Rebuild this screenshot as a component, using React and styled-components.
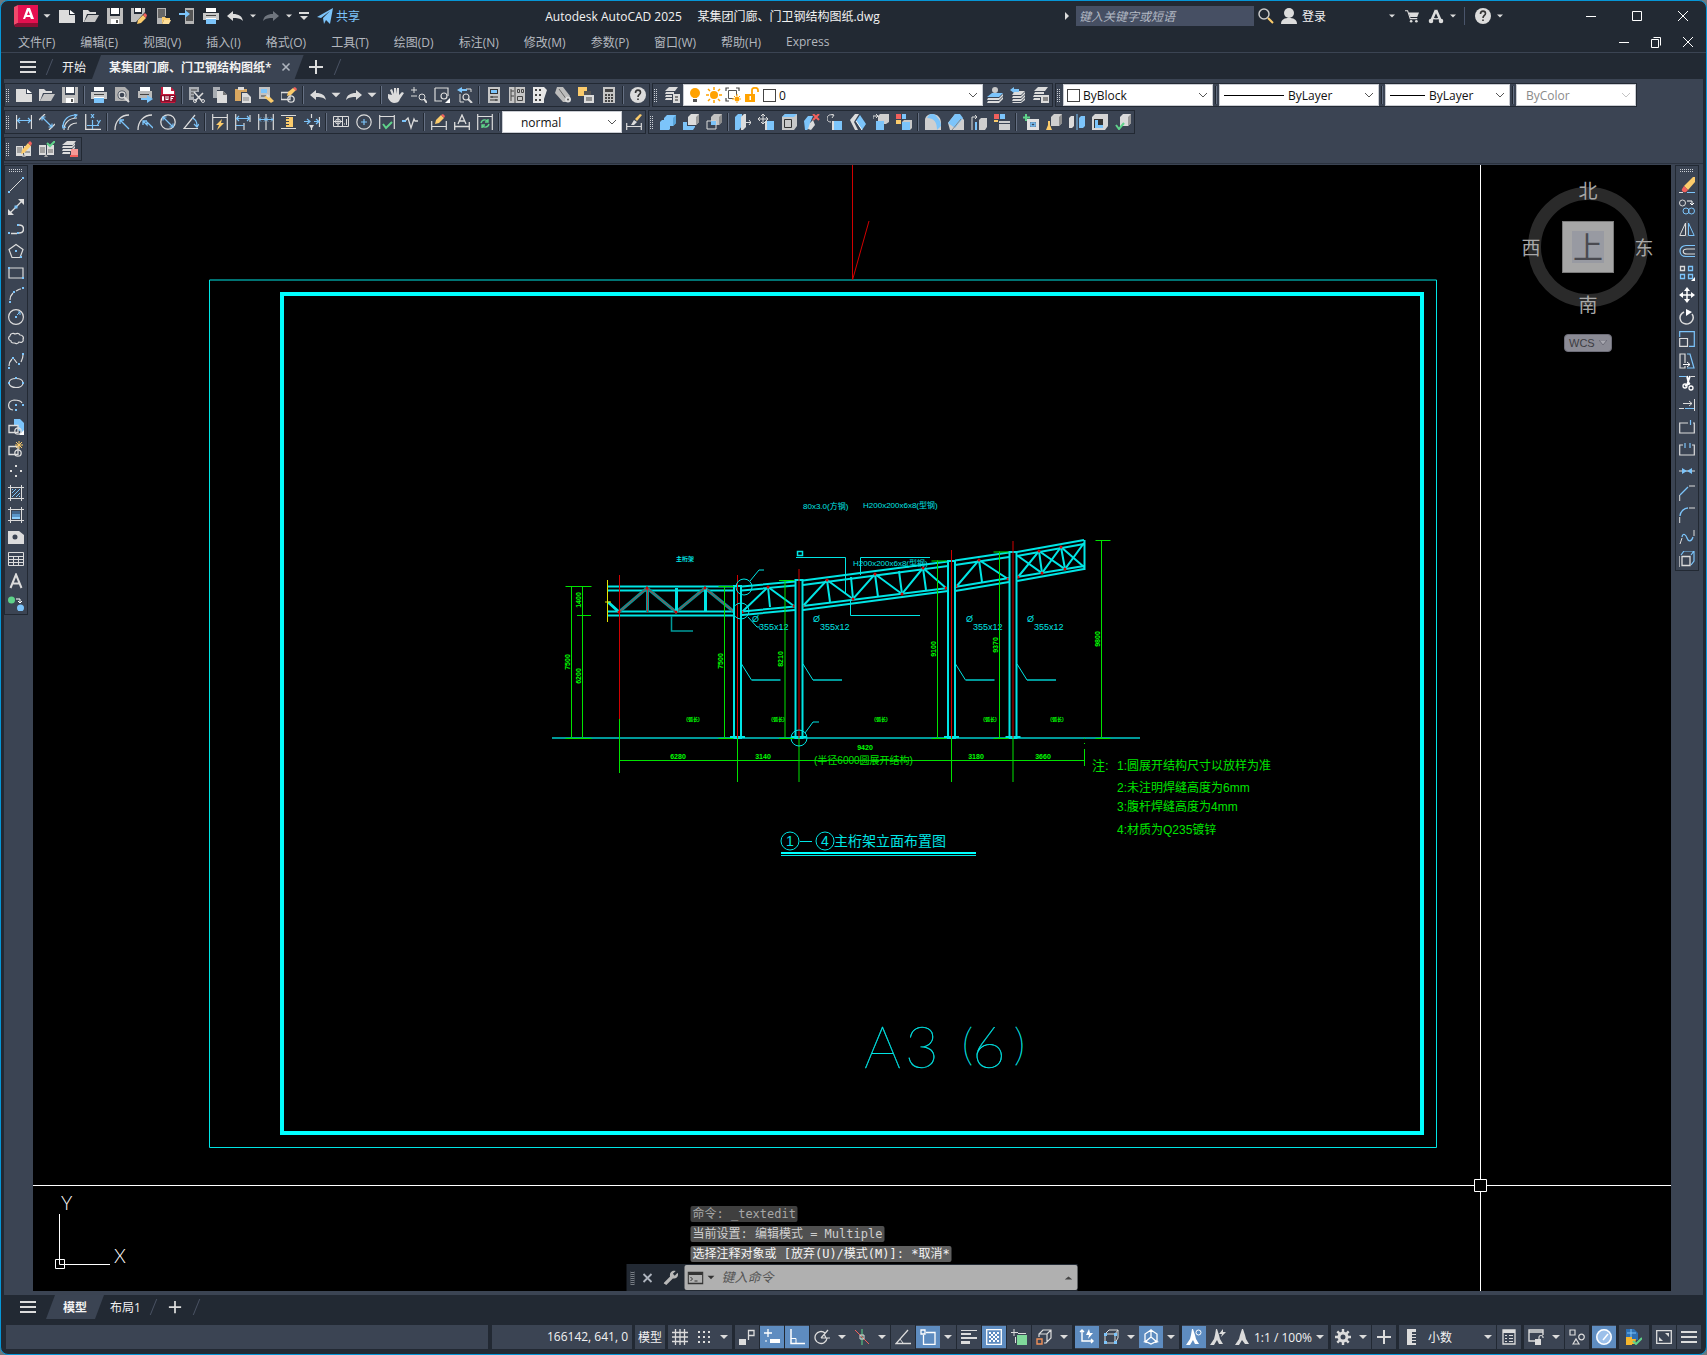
import React from 'react'
import styled, { createGlobalStyle, css } from 'styled-components'

const W = '#dcdcdc'
const B = '#7cc4fa'
const Y = '#fbcb6b'
const G = '#5fd38a'
const R = '#f2605c'
const CYAN = '#00e5e5'
const TEAL = '#009a9a'
const GREEN = '#00e400'
const RED = '#d00000'

const GlobalStyle = createGlobalStyle`
  * { box-sizing: border-box; }
  body {
    margin: 0;
    background: #6d7a80;
    font-family: "Open Sans", "Noto Sans CJK SC", sans-serif;
    font-size: 12px;
    color: #f2f2f2;
  }
  button, input, select { font: inherit; color: inherit; }
`

const Window = styled.div`
  min-height: 100vh;
  display: flex;
  flex-direction: column;
  background: #222933;
  border: 1px solid #0696d7;
  border-radius: 8px;
  padding-bottom: 5px;
  overflow: hidden;
`
const TitleBar = styled.header`
  display: flex;
  align-items: center;
  height: 30px;
  padding-left: 13px;
`
const Side = styled.div`
  display: flex;
  align-items: center;
  flex: none;
`
const Title = styled.h1`
  flex: 1;
  margin: 0;
  font-size: 12px;
  font-weight: 400;
  text-align: center;
  white-space: pre;
`
const IconButton = styled.button`
  display: inline-flex;
  align-items: center;
  justify-content: center;
  flex: none;
  width: ${({ $w }) => $w || 23}px;
  height: ${({ $h }) => $h || 22}px;
  padding: 0;
  border: 0;
  background: ${({ $on }) => ($on ? '#5e8cc0' : 'transparent')};
  &:hover { background: #5a6b80; }
`
const TextButton = styled.button`
  border: 0;
  padding: 0;
  background: none;
  white-space: nowrap;
  color: ${({ $c }) => $c || 'inherit'};
`
const AppButton = styled(TextButton)`
  display: flex;
`
const Share = styled(TextButton)`
  display: flex;
  align-items: center;
  gap: 3px;
  margin-left: 4px;
  color: ${B};
`
const SearchBox = styled.input`
  width: 178px;
  height: 20px;
  margin: 0 1px 0 6px;
  padding: 0 3px;
  border: 0;
  background: #464f63;
  &::placeholder { color: #b3b9c4; font-style: italic; opacity: 1; }
`
const Login = styled(TextButton)`
  display: flex;
  align-items: center;
  gap: 5px;
  margin: 0 58px 0 3px;
`
const VLine = styled.span`
  width: 1px;
  height: 18px;
  margin: 0 6px 0 5px;
  background: #4a556b;
`
const WinButtons = styled.div`
  display: flex;
  margin-left: 62px;
`
const MenuBar = styled.nav`
  display: flex;
  align-items: center;
  gap: 25px;
  height: 22px;
  padding: 0 2px 0 17px;
  border-bottom: 1px solid #3b4453;
`
const MenuEnd = styled.div`
  display: flex;
  margin-left: auto;
`
const TabBar = styled.div`
  display: flex;
  align-items: flex-end;
  height: ${({ $h }) => $h}px;
  padding-left: 15px;
`
const TabTool = styled.button`
  display: flex;
  align-items: center;
  justify-content: center;
  width: 24px;
  height: 24px;
  padding: 0;
  border: 0;
  background: none;
`
const Tab = styled.button`
  display: flex;
  align-items: center;
  gap: 7px;
  height: 24px;
  border: 0;
  padding: 0 ${({ $pad }) => $pad || 0}px;
  ${({ $active, $end }) => $active && css`
    margin-left: 6px;
    padding: 0 ${$end}px 0 17px;
    font-weight: 600;
    clip-path: polygon(9px 0, 100% 0, calc(100% - 9px) 100%, 0 100%);
  `}
  background: ${({ $active }) => ($active ? '#3b4453' : 'none')};
`
const Slash = styled.span`
  width: 1px;
  height: 16px;
  margin: 4px ${({ $r }) => $r || 9}px 4px ${({ $l }) => $l || 9}px;
  background: #4a5364;
  transform: skewX(-22deg);
`
const Work = styled.div`
  flex: 1;
  display: flex;
  flex-direction: column;
  margin: 0 3px;
  background: #3b4453;
`
const Bars = styled.div`
  display: flex;
  flex-direction: column;
  gap: 3px;
  padding: 4px 0 2px;
  border-bottom: 1px solid #2b323e;
`
const BarRow = styled.div`
  display: flex;
  gap: 2px;
`
const ToolBar = styled.div`
  display: flex;
  flex-direction: ${({ $col }) => ($col ? 'column' : 'row')};
  align-items: center;
  flex: none;
  ${({ $col }) => ($col ? 'width: 24px;' : 'height: 24px;')}
  border: 1px solid #222933;
`
const Grip = styled.span`
  flex: none;
  width: ${({ $col }) => ($col ? 14 : 4)}px;
  height: ${({ $col }) => ($col ? 4 : 14)}px;
  margin: ${({ $col }) => ($col ? '2px 0 2px' : '0 2px 0 1px')};
  background-image:
    linear-gradient(${({ $bg }) => $bg || '#3b4453'} 50%, transparent 50%),
    linear-gradient(90deg, #ccd0d6 50%, transparent 50%);
  background-size: 2px 2px;
`
const Sep = styled.span`
  flex: none;
  width: 2px;
  height: 18px;
  margin: 0 2px;
  background: linear-gradient(90deg, #222933 50%, #657083 50%);
`
const Combo = styled.label`
  display: flex;
  align-items: center;
  flex: none;
  gap: 3px;
  width: ${({ $w }) => $w}px;
  height: 22px;
  padding: 0 1px ${({ $pad }) => `0 ${$pad || 3}`}px;
  background: #fff;
  border: 1px solid #c9ccd2;
  color: ${({ $off }) => ($off ? '#8a8a8a' : '#111')};
`
const Select = styled.select`
  flex: 1;
  min-width: 0;
  padding: 0;
  border: 0;
  background: none;
  appearance: none;
  outline: none;
  opacity: 1;
`
const Swatch = styled.span`
  width: 13px;
  height: 13px;
  border: 1px solid #444;
  background: #fff;
`
const LineSample = styled.span`
  flex: none;
  width: ${({ $w }) => $w}px;
  height: 1px;
  margin: 0 1px;
  background: #000;
`
const Main = styled.main`
  flex: 1;
  display: flex;
  align-items: stretch;
  padding: 1px 0 4px;
`
const Rail = styled.aside`
  flex: none;
  width: ${({ $w }) => $w}px;
  padding-left: ${({ $pad }) => $pad}px;
`
const Canvas = styled.section`
  position: relative;
  flex: 1;
  min-width: 0;
  background: #000;
`
const Sheet = styled.svg`
  display: block;
  width: 100%;
  height: auto;
`
const Navigator = styled.div`
  position: absolute;
  top: 2px;
  right: 13px;
  width: 140px;
  display: flex;
  flex-direction: column;
  align-items: center;
  gap: 7px;
`
const Wcs = styled.button`
  display: flex;
  align-items: center;
  justify-content: space-between;
  width: 48px;
  height: 18px;
  padding: 0 4px;
  border: 1px solid #6d6d78;
  border-radius: 4px;
  background: #8b8b95;
  color: #3c3c42;
  font-family: "Liberation Sans", sans-serif;
  font-size: 11px;
`
const CommandPanel = styled.div`
  position: absolute;
  left: 50%;
  bottom: 0;
  width: 451px;
  transform: translateX(-50%);
`
const History = styled.div`
  display: flex;
  flex-direction: column;
  align-items: flex-start;
  gap: 4px;
  padding: 0 0 2px 64px;
  font-family: "DejaVu Sans Mono", "Noto Sans CJK SC", monospace;
`
const HistoryLine = styled.div`
  padding: 0 2px;
  height: 16px;
  line-height: 16px;
  border-radius: 2px;
  white-space: pre;
  background: ${({ $bg }) => $bg};
  color: ${({ $c }) => $c};
`
const CommandBar = styled.div`
  display: flex;
  align-items: center;
  height: 27px;
  padding-left: 3px;
  background: #222933;
`
const CommandField = styled.label`
  flex: 1;
  display: flex;
  align-items: center;
  gap: 3px;
  height: 25px;
  margin-left: 2px;
  padding: 0 3px;
  border-radius: 2px;
  background: #b0b0b0;
`
const CommandInput = styled.input`
  flex: 1;
  min-width: 0;
  padding: 0 0 0 3px;
  border: 0;
  outline: none;
  background: none;
  color: #222;
  &::placeholder { color: #555; font-style: italic; opacity: 1; font-size: 13px; }
`
const StatusBar = styled.footer`
  display: flex;
  gap: 3px;
  height: 24px;
  margin: 6px 5px 0;
`
const StatusFill = styled.div`
  flex: 1;
  margin-right: 1px;
  background: #3b4453;
`
const Coords = styled.div`
  width: 140px;
  padding-right: 4px;
  line-height: 24px;
  text-align: right;
  background: #3b4453;
`
const StatusGroup = styled.div`
  display: flex;
  gap: 1px;
`
const StatusCell = styled.div`
  display: flex;
  align-items: center;
  height: 24px;
  background: #3b4453;
`
const StatusText = styled(TextButton)`
  width: ${({ $w }) => $w}px;
  text-align: ${({ $align }) => $align || 'center'};
  padding-left: ${({ $pad }) => $pad || 0}px;
`

// every icon is a list of layers on a 16x16 grid
const s = (d, c = W, w = 1) => ({ d, fill: 'none', stroke: c, strokeWidth: w })
const f = (d, c = W) => ({ d, fill: c })
const ring = (x, y, r) => `M${x - r} ${y}a${r} ${r} 0 1 0 ${r * 2} 0a${r} ${r} 0 1 0 ${-r * 2} 0z`
const box = (x, y, w, h) => `M${x} ${y}h${w}v${h}h${-w}z`
const pencil = f('M5 13l1-4 6-7 3 3-7 7z', Y)
const pencilTip = f('M12 2l2-2 2 2-1 3z', R)

const icons = {
  newFile: [f('M0 2h10v5h6v8H0z'), f('M11 2l5 4h-5z', '#fff')],
  open: [f('M0 2h5l2 2h6v2H4l-3 8H0z'), f('M5 7h11l-4 7H1z', '#c4c4c4')],
  save: [f('M0 0h3v8h10V0h3v16H0z', '#bdbdbd'), f(box(4, 0, 8, 6), '#fff'), f(box(4, 11, 8, 5), '#fff'), f(box(9, 12, 2, 3), '#555')],
  saveAs: [f('M0 0h3v6h8V0h3v4L5 14H0z', '#bdbdbd'), f(box(4, 0, 6, 4), '#fff'), f('M6 16l1-4 5-5 3 3-5 5z', Y), f('M12 7l2-2 2 2-1 3z', R)],
  openMobile: [f('M2 0h9v8H7v8H2z', '#b5b5b5'), f(box(3, 1, 7, 9), '#666'), f('M7 9h3l1 1h4v2H9l-2 4z', Y), f('M9 12h7l-2 4H7z', '#ffe09a')],
  saveMobile: [f(box(6, 0, 9, 16), '#b5b5b5'), f(box(7, 2, 7, 11), '#555'), f('M0 5h6V2l5 4-5 4V7H0z', B)],
  print: [f(box(3, 0, 10, 4), '#fff'), f('M0 5h16v7H0z', '#c8c8c8'), f(box(3, 7, 10, 1), '#444'), f(box(3, 10, 10, 6), B), f(box(3, 10, 10, 1), '#fff')],
  undo: [f('M6 3v3c6 0 9 2 10 7-3-3-6-3-10-3v3L0 8z')],
  redo: [f('M10 3v3C4 6 1 8 0 13c3-3 6-3 10-3v3l6-5z')],
  redoOff: [f('M10 3v3C4 6 1 8 0 13c3-3 6-3 10-3v3l6-5z', '#6f757e')],
  drop: [f('M4 6h8l-4 4z')],
  dropBig: [f('M2 5h12l-6 6z')],
  customize: [f('M3 4h10v2H3z'), f('M4 8h8l-4 4z')],
  plane: [f('M0 9L16 0l-3 16-4-4-2 4-1-6 7-7-9 7z', B)],
  searchGlass: [s(ring(6, 6, 5), '#c8c8c8', 1.5), s('M10 10l5 5', Y, 2)],
  user: [f(ring(8, 5, 5)), f('M0 16c0-5 4-6 8-6s8 1 8 6z')],
  cart: [s('M0 2h3l3 9h8', W, 1.2), f('M4 4h12l-2 5H6z'), f(ring(7, 14, 1.5)), f(ring(13, 14, 1.5))],
  aMark: [s('M8 2L3 13.500M8 2l5 11.500', W, 2.6), s('M4 10c2 1 6 1 8 0', W, 1.6), f(ring(3, 13, 2.3)), f(ring(13, 13, 2.3))],
  help: [f(ring(8, 8, 8)), s('M5.500 6c0-4 5-3.500 5-.5 0 2-2.500 2-2.500 4.500', '#333', 1.6), f(box(7.2, 11.5, 1.6, 1.6), '#333')],
  minimize: [s('M3 8.500h10', '#fff')],
  maximize: [s('M3.500 3.500h9v9h-9z', '#fff')],
  restore: [s('M3.500 5.500h7v8h-7z', '#fff'), s('M5.500 3.500h7v8', '#fff')],
  close: [s('M3 3l10 10M13 3L3 13', '#fff')],
  closeSmall: [s('M4 4l8 8M12 4l-8 8', '#aeb4be', 1.8)],
  menu: [f('M0 2h16v2H0zM0 7h16v2H0zM0 12h16v2H0z')],
  plus: [f('M7 1h2v6h6v2H9v6H7V9H1V7h6z')],
  preview: [f('M1 0h10l4 4v10H1z', '#b0b0b0'), f(ring(8, 8, 4.5), '#3b4453'), s(ring(8, 8, 3), W, 1.3), s('M10 10l5 5', W, 2)],
  publish: [f(box(3, 0, 10, 4), '#fff'), f('M1 4h14v7H1z', '#bbb'), f(box(3, 7, 9, 1), '#444'), f('M4 11h6V8l6 4-6 4v-3H4z', B)],
  dwf: [f('M1 0h10l4 4v12H1z', '#c8193c'), f('M3 0h8v4h3v3H3z', '#fff'), f('M0 8h16v7H0z', '#8c0f2c'), s('M2.500 9.500v4H3.500v-4zM6 9v4l1-1 1 1V9M11 14V9.500h3M11 11.500h2', '#fff')],
  cut: [f('M0 0h10v5H5v8H0z', '#a9adb3'), s('M2 3h6M2 6h4M2 9h3', '#444'), s('M5 5l8 9M14 6l-8 8', W, 1.6), s(ring(6, 14, 1.5)), s(ring(14, 14, 1.5))],
  copy: [f('M1 0h7v3H5v8H1z', '#a9adb3'), f('M5 4h6l4 4v8H5z'), f('M11 4l4 4h-4z', '#777')],
  paste: [f('M0 2h12v3H6v9H0z', '#d9a760'), f(box(3, 0, 6, 3)), f('M7 6h5l4 4v6H7z'), s('M8 11h6M8 13h6', '#888')],
  match: [f('M1 0h11v12H1z', '#c2c2c2'), f(box(3, 2, 6, 4), B), s('M3 9h6', '#444'), f('M6 10l4-2 6 6-3 2z', Y), f('M9 7l3 2-1 2-3-2z')],
  blockEdit: [s('M0 5.500h9v7H0z', W, 1.3), s(ring(10, 12, 3.2), W, 1.3), f('M6 9l1-4 5-4 3 2-5 5z', Y), f('M12 1l2-1 2 2-1 2z', R)],
  hand: [f('M4 8L2 3l2-1 2 5V1h2v6l1-6h2l0 7 3-3 2 1-4 6c-1 3-3 4-6 4-4 0-5-4-8-8l2-1z')],
  zoomRt: [s('M0 3h6M3 0v6M0 9h6'), s(ring(11, 10, 3)), s('M13 12l3 4', W, 2)],
  zoomWin: [s('M1 1h13v8M1 1v13h7', W, 1.2), s(ring(10, 9, 3), W, 1.2), f('M16 11v5h-5z', '#fff')],
  zoomPrev: [s('M9 2h5v3M3 7v8h4', W), f('M0 3l5-3v2h5v2H5v2z', B), s(ring(9, 10, 3), W, 1.2), s('M11 12l4 4', W, 2)],
  properties: [f(box(2, 0, 12, 16), '#c6c6c6'), f(box(4, 2, 8, 5), '#333'), f(box(5, 3, 6, 3), B), s('M4 10h8M4 13h8M6 9v2M10 12v2', '#333')],
  designCenter: [f(box(0, 0, 16, 16), '#c6c6c6'), s('M2 2v12M2 4h3M2 9h3M6 0v16', '#444'), s('M8.500 2.500h2v3h-2zM12.500 2.500h2v3h-2zM8.500 9.500h5v4h-5z', '#444')],
  palettes: [f('M1 0h11l3 3-3 9v4H1z', '#e8e8e8'), f('M3 2h2v2H3zM7 2h2v2H7zM3 7h2v2H3zM7 7h2v2H7zM3 12h2v2H3zM7 12h2v2H7z', '#444')],
  sheets: [f('M2 0h6l7 9-3 6H8L0 6z', '#bcbcbc'), s('M4 2l8 11', '#666'), f(ring(13, 12.5, 3)), f(ring(13, 12.5, 1), '#555')],
  markup: [f(box(0, 0, 9, 9), Y), f('M6 4h7v4H6z', '#555'), f(box(6, 8, 10, 8)), s('M8 11h6M8 13h6', '#444')],
  calc: [f(box(2, 0, 12, 16), '#c6c6c6'), f(box(4, 2, 8, 3), '#444'), f('M4 7h2v2H4zM7 7h2v2H7zM10 7h2v2h-2zM4 10h2v2H4zM7 10h2v2H7zM10 10h2v2h-2zM4 13h2v2H4zM7 13h2v2H7zM10 13h2v2h-2z', '#444')],
  layerProps: [f('M5 0h9l-3 4H1z'), f('M2 5h8v2H1zM2 8h6v2H1zM2 11h6v2H1z'), f(box(9, 7, 7, 9)), s('M11 10h3M11 13h3', '#222')],
  layerCurrent: [f('M5 6h11l-4 4H0z', B), f('M1 11h11l4-4v2l-4 4H0zM1 14h11l4-4v2l-4 4H0z'), f(ring(8, 3, 3), '#c9c9c9')],
  layerPrev: [f('M5 4h10l-4 4H2z'), f('M3 9h8l4-4v2l-4 4H2zM3 12h8l4-4v2l-4 4H2zM3 15h8l4-4v2l-4 3H2z'), f('M0 3l4-3v2h5v3H4v1z', B)],
  layerStates: [f('M5 0h10l-3 4H1z'), f('M2 5h9v2H1zM1 8h7v2H0zM1 11h6v2H0z'), f(box(8, 8, 8, 8)), s('M10 11h5M10 13h5', '#333')],
  bulb: [f(ring(8, 6, 5), '#ffa200'), f('M5 8h6l-1 3H6z', '#ffa200'), f('M6 12h4v3H6z', '#555')],
  sun: [f(ring(8, 8, 4), '#ffa200'), s('M8 0v3M8 13v3M0 8h3M13 8h3M2 2l2 2M12 12l2 2M14 2l-2 2M2 14l2-2', '#ffa200', 1.5)],
  vpSun: [s('M1 4V1h3M11 1h3v3M1 11v3h3', '#444', 1.2), s('M3.500 3.500h8v5M3.500 3.500v8h5', '#555'), f(ring(12, 12, 2.5), '#ffa200'), s('M12 7v2M12 15v1M7 12h2M15 12h1M9 9l1 1M15 9l-1 1', '#ffa200')],
  unlock: [f(box(1, 7, 10, 8), '#ffa200'), s('M8 7V3c0-3 6-3 6 0v2', '#ffa200', 1.8), f(box(5.5, 9, 1.5, 4), '#fff')],
  chevron: [s('M4 6l4 4 4-4', '#555')],
  chevronOff: [s('M4 6l4 4 4-4', '#c4c4c4')],
  // dimension tools
  dimLinear: [s('M.5 1v14M15.500 1v14', W, 1.3), s('M1 6.500h14M4 4L1.500 6.500 4 9M12 4l2.500 2.500L12 9', B, 1.2)],
  dimAligned: [s('M0 6l6-6M10 16l6-6', W, 1.3), s('M3 3l10 10M3 6.500V3h3.500M13 9.500V13H9.500', B, 1.2)],
  dimArc: [s('M2 16C2 9 7 4 15 4M6 16c0-4 4-7 9-7', W, 1.2), s('M1 13C1 5 7 1 14 1M12 0l3 1-3 3M0 11l1 3 3-1', B, 1.2)],
  dimOrdinate: [s('M.7 0v15.300H16', W, 1.3), s('M7.500 6v9M2 11.500h12M6 0l3 4M9 0L6 4M12 6l2 3M15.500 6l-3 5', B, 1.2)],
  dimRadius: [s('M1 16C1 7 7 1 15 1', W, 1.3), s('M15 15L6 6M6 10V6h4', B, 1.3)],
  dimJog: [s('M1 16C1 7 7 1 15 1', W, 1.3), s('M6 7l4 4V8l6 6M6 11V7h4', B, 1.3)],
  dimDiameter: [s(ring(8, 8, 7.2), W, 1.3), s('M3 3l10 10M3 6.500V3h3.500M13 9.500V13H9.500', B, 1.2)],
  dimAngular: [s('M12 1L1 14.500h14', W, 1.2), s('M9 4c4 1 5 5 5 8M11 10l3 3 2-3', B, 1.2)],
  dimQuick: [s('M.7 0v16M15.300 0v16M1 3.500h14', W, 1.2), f('M10 5l-6 6h3l-2 5 7-7H9z', Y)],
  dimBaseline: [s('M.7 0v16M9 9v7M15 1v7', W, 1.2), s('M1 4.500h13M1 11.500h8M12 2l2.500 2.500L12 7M4 2L1.500 4.500 4 7', B, 1.2)],
  dimContinue: [s('M.7 0v16M8 0v16M15.300 0v16', W, 1.2), s('M1 5.500h14M3 3.500l-2 2 2 2M13 3.500l2 2-2 2M6 3.500l2 2-2 2M10 3.500l-2 2 2 2', B)],
  dimSpace: [s('M0 1.500h15M0 14.500h15', W, 1.2), f('M5 3h7v10H5v-2h3v-1H5V8h3V7H5V5h3V4H5z', Y)],
  dimBreak: [s('M7.500 0v4M7.500 12v4M15.500 3v10', W, 1.2), s('M0 7.500h5M10 7.500h5M12 5l3 2.500L12 10M3 5l3 2.500L3 10', B, 1.2), f('M5 11h5l-2.500 4z')],
  tolerance: [s('M.5 2.500h15v10H.5zM9.500 3v9'), s(ring(5, 7.5, 2.5)), s('M1 7.500h8M5 3v9M11.500 9.500v1M13.500 5v6')],
  centerMark: [s(ring(8, 8, 7.2), W, 1.2), s('M8 5v6M5 8h6', B, 1.2)],
  inspect: [s('M.7 1v14M15.300 1v14M1 2.500h14', W, 1.2), s('M4 10l3 4 6-6', G, 2)],
  jogLine: [s('M3 7l3-3 3 10 3-9 1 2h3', W, 1.3), s('M0 7h4', B, 2)],
  dimEdit: [s('M.7 7v9M15.300 7v9M1 12.500h14', W, 1.2), f('M4 10l1-4 5-5 3 3-5 5z', Y), f('M10 1l2-1 2 2-1 2z', R)],
  dimTextEdit: [s('M.7 8v8M15.300 8v8M1 12.500h14M4 10l4-9 4 9M5.500 7h5', W, 1.3)],
  dimUpdate: [s('M.7 0v16M15.300 0v16M1 2.500h14', W, 1.2), s('M4 9c1-4 6-4 7-1M12 10c-1 4-6 4-7 1M11 5v3H8M5 14v-3h3', G, 1.4)],
  dimStyle: [s('M.7 9v7M15.300 9v7M1 12.500h14', W, 1.2), f('M5 11l3-5 3 2-3 3z', W), f('M9 5l5-5 2 1-5 6z', Y)],
  // solids editing
  union: [f('M4 4l3-3h9v8l-3 3H10v3l-1 1H0V8l2-2h2z', B), f('M13 4l3-3v8l-3 3z', '#59a3d8')],
  subtract: [f('M5 3l3-3h8v8l-3 3H5z'), f('M0 8h4v4h8v1l-2 3H0z', B), f('M13 3l3-3v8l-3 3z', '#9b9b9b')],
  intersect: [f('M5 3l3-3h8v8l-3 3H5z', '#c2c2c2'), s('M1 7h9v8H1z', W), f(box(5, 7, 5, 4), B), f('M13 3l3-3v8l-3 3z', '#8d8d8d')],
  extrudeF: [f('M0 3l3-3h4v12l-3 4H0z', B), f('M6 3l3-3h2v13l-3 3H6z'), s('M11 8.500h5M14 6l2 2.500L14 11')],
  moveF: [s('M5 0v10M0 5h10M3 2l2-2 2 2M8 3l2 2-2 2M3 8l2 2 2-2M2 3L0 5l2 2'), f(box(8, 7, 8, 9), B), f(box(7, 7, 2, 9))],
  offsetF: [f('M1 3l3-3h12v12l-3 4H1z', '#c8c8c8'), f('M1 3l3-3h12l-3 3z', B), s('M3.500 5.500h7v8h-7z', '#333')],
  deleteF: [f('M0 7l4-5h5L6 9v4l-3 3H1z', B), f('M6 9l3-3 2 5-4 5-3-1z'), s('M9 0l6 6M15 0L9 6', R, 2)],
  rotateF: [s('M6 1C2 0 0 2 0 5c0 2 2 3 4 3M4 0l3 1-2 3'), f(box(7, 7, 8, 9), B), f('M5 7h2v9H5z')],
  taperF: [f('M0 6l5-6h4L4 8l4 8H5z'), f('M6 7l4-6 6 9-4 6z', B), s('M6 7l6 9', '#fff')],
  copyF: [f('M5 2l2-2h9v8l-3 2H5z', '#cfcfcf'), f(box(3, 7, 8, 9), B), s('M0 5V2h4M3 0l2 2-2 2')],
  colorF: [f(box(0, 0, 5, 5), R), f(box(6, 0, 4, 5), B), f(box(0, 6, 5, 4), Y), f('M6 8l2-2h8v8l-2 2H6z', '#c9c9c9'), f(box(6, 8, 8, 8), B)],
  filletE: [f('M0 6c0-4 4-6 7-6 6 0 9 4 9 9v7H0z', '#cfcfcf'), f('M4 1c3-2 6-1 8 2 3 3 4 6 4 9l-4 4C12 8 9 4 2 4z', B)],
  chamferE: [f('M0 9l7-9h4l5 6v10H2z', '#cfcfcf'), f('M0 9l7-9h5l3 4-8 10z', B), s('M4 16l9-11', '#888')],
  copyE: [s('M1 16V3h5M4 1l2 2-2 2', W), f('M4 8h2v8H4z', B), f('M8 6l2-2h6v9l-2 3H8z', '#cfcfcf')],
  colorE: [f(box(0, 0, 5, 5), R), f(box(6, 0, 5, 5), B), f('M5 7h11v2H5zM5 10h11v6H5z', '#cfcfcf'), f(box(0, 6, 4, 2), Y)],
  imprint: [s('M3 0v7M0 3.500h7', G, 2), f('M4 5h12v11H4z', '#e0e0e0'), f(box(7, 8, 6, 5), '#3b4453'), s('M8 9h4v3H8z', B, 1.5)],
  clean: [f('M5 3l3-3h8v9l-3 3H5z', '#cfcfcf'), f('M13 3l3-3v9l-3 3z', '#8d8d8d'), f('M2 7h2v4l2 5H0l2-5z', Y)],
  separate: [f('M0 4l2-2h3v10l-2 2H0z'), s('M8 0v16', B), f('M10 4l2-2h4v10l-2 2h-4z', B)],
  shell: [f('M0 3l3-3h13v12l-3 4H0z', '#d6d6d6'), f(box(2, 5, 9, 9), '#333'), f('M3 6h3v5h5v3H3z', B)],
  check: [f('M5 3l3-3h8v9l-3 3H5z', '#dadada'), f('M13 3l3-3v9l-3 3z', '#999'), s('M1 11l3 4 5-6', G, 2)],
  refEdit: [f('M0 5h7v10H0zM8 5h7v10H8z'), s('M1 7h5M1 9h5M1 11h5M9 11h5', '#666'), pencil, pencilTip, f('M6 16l2-3 2 3z', '#aaa')],
  refSave: [f('M0 4h7v10H0zM8 4h7v10H8z'), s('M1 7h5M1 9h5M1 11h5M9 9h5M9 11h5', '#666'), f('M5 16l2-3 2 3z', '#aaa'), s('M8 2l3 3 5-5', G, 2)],
  refClose: [f('M5 0h9l-3 4H0z'), f('M1 5h9l3-3v2l-3 3H0zM1 8h9l3-3v2l-3 3H0zM1 11h7v2H0z'), f('M9 8h7v7H9z', '#f79a97'), f('M8 14h8v2H8z', R)],
  // draw
  line: [s('M1 15L15 1'), f('M0 14h2v2H0zM14 0h2v2h-2z', B)],
  xline: [s('M2 14L14 2', W, 1.2), f('M0 16v-6l6 6zM16 0v6l-6-6z'), f(box(6.5, 6.5, 3, 3), B)],
  pline: [s('M3 12.500h6M11 4c6 0 6 8 0 8', W, 1.5), f('M0 11h2v2H0zM9 11h2v2H9zM9 3h2v2H9z', B)],
  polygon: [s('M8 1.500l7 5-3 8H4l-3-8z', W, 1.2), f('M7 7h2v2H7zM12 13h2v2h-2z', B)],
  rect: [s('M1 3h14v10H1z', W, 1.2), f('M0 2h2v2H0zM14 12h2v2h-2z', B)],
  arc: [s('M2 13c0-3 1-5 3-7M8 4c2-1 3-2 5-2', W, 1.2), f('M1 14h2v2H1zM5 4h2v2H5zM14 0h2v2h-2z', B)],
  circle: [s(ring(8, 8, 7.4), W, 1.2), f('M7 7h2v2H7z', B), s('M9 6l3-3M10 3h2v3', B)],
  cloud: [s('M3 10C0 9 0 6 2 5c0-3 4-3 5-2 2-1 4-1 5 1 3 0 4 3 3 4 1 3-2 4-4 3-1 2-4 2-4 1-2 0-4 0-4-2z', W, 1.2)],
  spline: [s('M1 13c0-3 1-5 3-7M6 6l3 4M13 9c1-2 2-4 2-7', W, 1.2), f('M0 14h2v2H0zM4 4h2v2H4zM10 10h2v2h-2zM14 0h2v2h-2z', B)],
  ellipse: [s('M1 8c0-6 14-6 14 0s-14 6-14 0z', W, 1.2), f('M0 7h2v2H0zM7 2h2v2H7zM14 7h2v2h-2z', B)],
  ellArc: [s('M5 13C-1 12-1 4 6 3c4 0 7 1 8 3', W, 1.2), f('M7 7h2v2H7zM14 7h2v2h-2zM7 12h2v2H7z', B)],
  insert: [f('M6 0h6l4 4v11l-6-4V6H6z', B), s('M1 6.500h9v7H1z', W, 1.3), s(ring(10, 12, 3.2), W, 1.3), f('M16 11v5h-5z', '#fff')],
  block: [s('M1 5.500h9v8H1z', W, 1.3), s(ring(10, 12, 3.2), W, 1.3), s('M11 0v8M7 4h8M8 1l6 6M14 1L8 7', Y)],
  point: [f('M7 2h2v2H7zM2 7h2v2H2zM12 7h2v2h-2zM7 12h2v2H7z')],
  hatch: [s('M0 2.500h16M0 13.500h16M2.500 0v16M13.500 0v16'), s('M4 8l4-4M4 12l8-8M8 12l4-4M4 5l1-1M11 12l1-1', B)],
  gradient: [s('M0 2.500h16M0 13.500h16M2.500 0v16M13.500 0v16'), f(box(4, 4, 8, 3), '#42668c'), f(box(4, 7, 8, 3), '#5a95c8'), f(box(4, 10, 8, 2), '#8bcdfc')],
  region: [f('M0 2h11l5 4v9H0z'), f(ring(7, 8, 2.5), '#3b4453')],
  table: [s('M.5 1.500h15v13H.5zM0 5.500h16M0 8.500h16M0 11.500h16M5.500 5v9M10.500 5v9')],
  mtext: [s('M2.500 15L8 1.500 13.500 15M4.500 10.500h7', W, 2)],
  addSel: [f(ring(3.5, 5, 3.5), G), f(ring(12.5, 13, 3.5), B), s('M8 4h4v4M10 6l2 2 2-2', '#fff')],
  // modify
  erase: [f('M5 9l9-9h2v5l-7 8z', Y), f('M5 9l4 4-2 2c-2 1-5-1-4-3z', R), s('M0 15.500h4'), s('M8 15.500h8', B)],
  copyObj: [s(ring(3.5, 4, 3)), s('M8 2h5v4M11 4l2 2 2-2', '#fff'), s(ring(7, 12, 3), B), s(ring(12.5, 12, 3), B)],
  mirror: [s('M6.500 2v12.500H.8z'), s('M9.500 2v12.500h5.700z', B), s('M8 0v16', '#888', 0.6)],
  offset: [s('M16 2.500H7c-8 0-8 11 0 11h9', B, 1.2), s('M16 6H8c-5 0-5 5 0 5h8', W, 1.2)],
  array: [s('M1.500 1.500h4v4h-4z', W, 1.3), s('M9.500 1.500h4v4h-4zM1.500 9.500h4v4h-4zM9.500 9.500h4v4h-4z', B, 1.3), f('M16 12v4h-4z', '#fff')],
  move: [s('M8 2v12M2 8h12', '#fff', 1.5), f('M8 0l3 4H5zM8 16l3-4H5zM0 8l4-3v6zM16 8l-4-3v6z', '#fff')],
  rotate: [s('M5 3C-1 6 0 14 7 15c6 0 9-6 6-10', W, 1.5), f('M7 0l6 3-6 4z', '#fff')],
  scale: [s('M.7 6V.7h14.600v14.600H10', B, 1.2), s('M.7 7.500h7.800v7.800H.7z', W, 1.2)],
  stretch: [s('M6 10V1H1v14h5v-2', W, 1.2), s('M8 1h3l4 14H8', B, 1.2), s('M4 11.500h7M8 9l3 2.500L8 14', '#fff')],
  trim: [s('M0 1.500h7', B), s('M12 1.500h4'), s('M8 1l2 9M11 1L8 10M11 8L6 11', '#fff', 1.8), s(ring(6, 11, 2), '#fff', 1.3), s(ring(12, 13, 2), '#fff', 1.3)],
  extend: [s('M15.500 2v12M0 11.500h5M4 6.500h9M10 4l3 2.500L10 9'), s('M6 11.500h9', B)],
  breakPt: [s('M9 4H.7v10h14.600V4H14', W, 1.2), s('M11.500 1v5', B, 1.2)],
  breakTwo: [s('M4 4H.7v10h14.600V4H13', W, 1.2), s('M6 2v5M11 2v5', B, 1.2)],
  join: [s('M0 8h16', W), f('M3 5l5 3-5 3zM13 5L8 8l5 3z', B)],
  chamfer: [s('M.7 16v-6M10 1h6'), s('M1 10l8-8', B, 1.3)],
  fillet: [s('M.7 16v-6M10 1h6'), s('M1 9c0-4 4-8 8-8', B, 1.3)],
  blend: [s('M1 15l2-6M15 1v6'), s('M3 8c1-5 4-2 5 1s4 5 6-1', B, 1.3)],
  explode: [s('M2 4l3-4h10v10l-3 4M12 4l3-4', B, 1.2), s('M0 5v11M3 5.500h8v9H3z', W, 1.3)],
  // command line and status bar
  wrench: [f('M0 14l7-7c-1-4 2-7 6-6l-3 3 2 2 3-3c2 4-2 7-5 6l-7 7z', '#b8b8b8')],
  prompt: [s('M.7 2.500h14.600v11H.7z', '#333', 1.3), s('M1 4h14', '#333', 2), s('M3 7l2 2-2 2M7 11h3', '#333')],
  upDark: [f('M3 10h10L8 6z', '#444')],
  downDark: [f('M2 5h12l-6 6z', '#333')],
  grid: [s('M3.500 0v16M8 0v16M12.500 0v16M0 3.500h16M0 8h16M0 12.500h16', W, 1.3)],
  dots: [f('M2 2h2v2H2zM7 2h2v2H7zM12 2h2v2h-2zM2 7h2v2H2zM7 7h2v2H7zM12 7h2v2h-2zM2 12h2v2H2zM7 12h2v2H7zM12 12h2v2h-2z')],
  infer: [f(box(0, 10, 7, 6)), s('M9.500 11V1.500H15v5H10', W, 1.3)],
  dynInput: [s('M4 0v8M0 4h8', '#fff', 1.3), f(box(6, 10, 10, 4), '#fff'), s('M2 11v2', '#fff')],
  ortho: [s('M2 0v14.500h14', '#fff', 1.5), s('M2 9.500h5v5', '#fff')],
  polar: [s('M11 4A6 6 0 1 0 13 9', W, 1.3), s('M7 9h9M7 9l7-8M10 5l2 4', W, 1.2)],
  iso: [s('M8 0v16', G), s('M1 1l14 14', R), s('M6 6h4v4H6z', '#ddd')],
  angle: [s('M13 1L1 14.500h15', W, 1.3), s('M5 10l3 4')],
  osnap: [s('M6 3.500h9v12H3.500V6', '#fff', 1.3), s('M1 1h4v4H1z', '#fff', 1.3)],
  weight: [f('M0 1h16v1H0zM0 4h10v2H0zM0 8h16v2H0zM0 12h9v3H0z')],
  transp: [s('M.7.7h14.600v14.600H.7z', '#fff', 1.3), f('M3 3h2v2H3zM7 3h2v2H7zM11 3h2v2h-2zM5 5h2v2H5zM9 5h2v2H9zM3 7h2v2H3zM7 7h2v2H7zM11 7h2v2h-2zM5 9h2v2H5zM9 9h2v2H9zM3 11h2v2H3zM7 11h2v2H7zM11 11h2v2h-2z', '#fff')],
  cycle: [s('M3 0v7M0 3.500h7', W), s('M7 4.500h8M4.500 8v6', W), f(box(6, 6, 10, 10), '#7fd89a')],
  osnap3d: [s('M3 8V5l4-4h8v8l-5 5H8M3 5h8l4-4M11 5v8', W, 1.2), s('M1 10h5v5H1z', '#f0905a', 1.4)],
  ducs: [s('M3 1v11h11M1 3l2-2 2 2M12 10l2 2-2 2', '#fff', 1.4), f('M10 0L7 6h3l-1 4 5-6h-3z', '#fff')],
  filter: [s('M2 5l4-4h9v8l-3 5M2 5h10v9H2zM12 5l3-4', W), f('M1 4h3v3H1zM11 4h3v3h-3zM1 12h3v3H1zM11 12h3v3h-3z', B)],
  gizmo: [s('M8 1v7l6 5M8 8l-6 5M8 1l6 4v7l-6 3-6-3V5z', '#fff', 1.3), f('M8 0l2 3H6zM0 13l4-2v3zM16 13l-4-2v3z', '#fff')],
  annoOn: [f('M6 0h1l2 6 1 4 3 5h-4l-2-4-3 5H0l4-6 1-4z', '#fff'), s(ring(12.5, 3.5, 2.5), '#fff')],
  annoAuto: [f('M6 0h1l2 6 1 4 3 5h-4l-2-4-3 5H0l4-6 1-4z'), f('M13 0l-4 5h3l-1 3 5-5h-3z')],
  annoScale: [f('M8 0h1l2 6 1 4 3 5h-4l-3-4-3 5H1l4-6 1-4z')],
  gear: [s(ring(8, 8, 4), W, 3), s('M8 0v3M8 13v3M0 8h3M13 8h3M2.300 2.300l2 2M11.700 11.700l2 2M13.700 2.300l-2 2M2.300 13.700l2-2', W, 2.4)],
  ruler: [f('M4 0h9v3H9v2h4v1H9v2h4v1H9v2h4v1H9v2h4v2H4z')],
  quickProps: [s('M2 1h12v14H2z', W, 1.3), f('M2 1h12v3H2z'), s('M4 6.500h2M4 9.500h2M4 12.500h2M8 6.500h4M8 9.500h4M8 12.500h4')],
  lockUi: [s('M7 12H1V1h14v5M1 3h14', W, 1.4), f(box(7, 10, 6, 6)), s('M11 10V8c0-2 4-2 4 0v1', W, 1.2)],
  isolate: [s('M1 1h5v5H1zM4 15l3-5 3 5z', W, 1.2), s(ring(12.5, 8, 2.8), W, 1.2)],
  perf: [f(ring(8, 8, 8), '#9cc0ea'), s(ring(8, 8, 7.2), '#fff', 1.5), s('M7 11l5-6', '#fff', 1.5)],
  trusted: [f('M0 0h8l4 4v7H0z', '#2d6fb3'), s('M1 4h9M5 0v8', B), f('M0 8h6v8H0z', '#f5b62e'), f('M6 10h4l-1 5H6z', '#f5b62e'), s('M7 12l3 3 6-6', G, 2)],
  fullScreen: [s('M.7 1.700h14.600v12.600H.7z', W, 1.3), f('M3 12V8l4 4zM13 4v4L9 4z')],
}

function Icon({ name, size = 16 }) {
  return (
    <svg width={size} height={size} viewBox="0 0 16 16" aria-hidden="true">
      {icons[name].map((layer, i) => <path key={i} {...layer} />)}
    </svg>
  )
}

function Tools({ list, w, h }) {
  return list.split(' ').map((name, i) => {
    if (name === '|') return <Sep key={i} />
    if (name === 'dropBig') return <IconButton key={i} $w={13} aria-label={name}><Icon name={name} size={12} /></IconButton>
    return <IconButton key={i} $w={w} $h={h} aria-label={name}><Icon name={name} /></IconButton>
  })
}

function ComboBox({ label, value, w, pad, off, before }) {
  return (
    <Combo $w={w} $pad={pad} $off={off}>
      {before}
      <Select aria-label={label} disabled={off} defaultValue={value}><option>{value}</option></Select>
      <Icon name={off ? 'chevronOff' : 'chevron'} />
    </Combo>
  )
}

const Logo = () => (
  <svg width="25" height="24" viewBox="0 0 25 24" aria-hidden="true">
    <path d="M0 3l4-2v18l-4 2z" fill="#f04a6b" />
    <path d="M4 1h20v18H4z" fill="#e51050" />
    <path d="M0 21l4-2h20v4H1z" fill="#8c0f33" />
    <path d="M9 15l4-11h3l4 11h-3l-1-2h-4l-1 2zM13 11h3l-1.500-4z" fill="#fff" />
  </svg>
)

const menus = ['文件(F)', '编辑(E)', '视图(V)', '插入(I)', '格式(O)', '工具(T)', '绘图(D)', '标注(N)', '修改(M)', '参数(P)', '窗口(W)', '帮助(H)', 'Express']

const drawTools = 'line xline pline polygon rect arc circle cloud spline ellipse ellArc insert block point hatch gradient region table mtext addSel'
const modifyTools = 'erase copyObj mirror offset array move rotate scale stretch trim extend breakPt breakTwo join chamfer fillet blend explode'

const Stroke = ({ d, c = CYAN, w = 1 }) => <path d={d} fill="none" stroke={c} strokeWidth={w} />

const columns = [
  { x: 737.5, top: 586, red: 575 },
  { x: 799, top: 580, red: 569 },
  { x: 951.5, top: 561, red: 550 },
  { x: 1013, top: 552, red: 541 },
]
const nodes = [
  [619, 612], [647, 588], [676, 612], [705, 588], [742, 612], [768, 587], [794, 606], [803, 606], [827, 580], [853, 599],
  [875, 574], [902, 594], [923, 568], [946, 588], [956, 586], [979, 560], [1008, 579], [1018, 577], [1039, 551], [1042, 573], [1061, 547], [1065, 569],
]
const heights = [
  { x: 571.5, y: 586, t: '7500', ty: 662 },
  { x: 582.5, y: 586, t: '6200', ty: 676 },
  { x: 724.5, y: 586, t: '7500', ty: 661 },
  { x: 785, y: 580, t: '8210', ty: 659 },
  { x: 937.5, y: 560.5, t: '9100', ty: 649 },
  { x: 999.5, y: 551.5, t: '9370', ty: 645 },
  { x: 1101.5, y: 540, t: '9800', ty: 639 },
]
const spans = [[678, 759, '6280'], [763, 759, '3140'], [865, 750, '9420'], [976, 759, '3180'], [1043, 759, '3660']]
const notes = [['1:圆展开结构尺寸以放样为准', 770], ['2:未注明焊缝高度为6mm', 792], ['3:腹杆焊缝高度为4mm', 811], ['4:材质为Q235镀锌', 834]]
const sheetMark = [['A', 864, 58, 1068], ['3', 905, 58, 1068], ['(', 962, 44, 1060], ['6', 972, 58, 1068], [')', 1014, 44, 1060]]

const SheetText = styled.text`
  font-family: "Liberation Sans", "Noto Sans CJK SC", sans-serif;
  font-size: ${({ $s }) => $s || 9}px;
  font-weight: ${({ $wt }) => $wt || 400};
  fill: ${({ $c }) => $c || CYAN};
  text-anchor: ${({ $mid }) => ($mid ? 'middle' : 'start')};
`
const ThinText = styled(SheetText)`
  font-family: "Lato", "Inter", sans-serif;
`
const OutlineText = styled(ThinText)`
  stroke: ${CYAN};
  stroke-width: 0.4px;
`

function Drawing() {
  return (
    <Sheet viewBox="33 165 1638 1126">
      <Stroke d="M209.500 280h1227v867.500h-1227z" />
      <Stroke d="M282 294h1140v839H282z" c="#00ffff" w={4} />
      <Stroke d="M852.500 165v115L869 221" c={RED} />

      {/* ground and left truss */}
      <Stroke d="M552 738h588" c={TEAL} w={2} />
      <Stroke d="M608 586.500h126M608 590.500h126M608 611.500h126M608 615.500h126" w={2} />
      <Stroke d="M619 612l28-24 29 24 29-24 28 23M647.500 588v24" c={TEAL} w={3} />
      <Stroke d="M619 612l28-24 29 24 29-24 28 23M647.500 588v24" c="#b83a3a" />
      <Stroke d="M608 602l11 10M676.500 588v24M705.500 588v24" w={3} />
      <Stroke d="M607.500 580v42M605 602h6" c="#e5e500" />

      {/* sloping truss */}
      <Stroke d="M742 586.500l53-5M742 590.500l53-5M803 580.500l145-19M803 585l145-19M955 560.500l54-8M955 565l54-8M1017 552l67-12M1017 556l67-12" w={2} />
      <Stroke d="M742 611.500l53-5M742 615l53-5M803 606l145-18M803 610l145-19M955 587l54-9M955 591l54-9M1017 577l67-11M1017 581l67-12" w={2} />
      <Stroke d="M742 612l26-25 26 19M803 606l24-26 26 19 22-25 27 20 21-26 23 20M956 587l23-27 29 19" w={2} />
      <Stroke d="M768 587l2 20M827 580l3 22M851 577l2 22M875 574l3 23M899 571l3 23M923 568l3 22M979 560l3 22M1039 551l3 22M1061 547l4 22" w={2} />
      <Stroke d="M1018 577l21-26 26 18 19-26M1018 556l24 17 19-26 23 20M1084.500 540v30" w={2} />
      {nodes.map(([x, y]) => <circle key={`${x}-${y}`} cx={x} cy={y} r="1.5" fill={RED} />)}

      {columns.map(({ x, top, red }) => (
        <g key={x}>
          <rect x={x - 3.5} y={top} width="7" height={738 - top} fill="#000" stroke={CYAN} strokeWidth="2" />
          <Stroke d={`M${x - 7.5} 737h15`} w={2} />
          <Stroke d={`M${x} ${red}V738`} c={RED} />
          <Stroke d={`M${x} 738v44`} c={GREEN} />
          <Stroke d={`M${x + 4} 664l10 16`} />
          <Stroke d={`M${x + 14} 680h29`} c={TEAL} w={2} />
        </g>
      ))}
      <Stroke d="M619.500 575v144" c={RED} />
      <Stroke d="M619.500 719v54" c={GREEN} />
      <Stroke d="M1084.500 738v1M1084.500 743v1M1084.500 749v17" c={GREEN} />

      {/* leaders and callouts */}
      <circle cx="744" cy="587" r="8" fill="none" stroke={CYAN} />
      <circle cx="741" cy="611" r="8" fill="none" stroke={CYAN} />
      <circle cx="799" cy="738" r="8" fill="none" stroke={CYAN} />
      <Stroke d="M750 581l9-11h5M748 617l9 10h3M805 733l8-11h6" />
      <Stroke d="M797.500 551.500h5v4h-5z" w={1.5} />
      <Stroke d="M796 557.500h49.500V594M860.500 575v-17.500H930M850.500 600v15.500H920" />
      <Stroke d="M671.500 616v15H693" c={TEAL} w={1.5} />
      <SheetText x="803" y="509" $s={8}>80x3.0(方钢)</SheetText>
      <SheetText x="863" y="508" $s={8}>H200x200x6x8(型钢)</SheetText>
      <SheetText x="853" y="566" $s={8}>H200x200x6x8(型钢)</SheetText>
      <SheetText x="676" y="561" $s={6} $wt={700}>主桁架</SheetText>
      {[759, 820, 973, 1034].map((x) => (
        <g key={x}>
          <SheetText x={x - 7} y="622">Ø</SheetText>
          <SheetText x={x} y="630">355x12</SheetText>
        </g>
      ))}

      {/* dimensions */}
      {heights.map(({ x, y, t, ty }) => (
        <g key={x}>
          <Stroke d={`M${x} ${y}V738M${x - 6} ${y + 0.5}h15M${x - 6} 738.500h15`} c={GREEN} />
          <SheetText $mid $s={7} $wt={700} $c="#00ff00" transform={`translate(${x - 2} ${ty}) rotate(-90)`}>{t}</SheetText>
        </g>
      ))}
      <Stroke d="M577 615.500h14" c={GREEN} />
      <SheetText $mid $s={7} $wt={700} $c="#00ff00" transform="translate(581 600) rotate(-90)">1400</SheetText>
      <Stroke d="M619 760.500h466" c={GREEN} />
      {spans.map(([x, y, t]) => <SheetText key={x} x={x} y={y} $mid $s={7} $wt={700} $c="#00ff00">{t}</SheetText>)}
      {[693, 778, 881, 990, 1057].map((x) => <SheetText key={x} x={x} y="721" $mid $s={5} $wt={700} $c="#00ff00">(弧长)</SheetText>)}
      <SheetText x="814" y="764" $s={10} $c={GREEN}>(半径6000圆展开结构)</SheetText>

      <SheetText x="1092" y="770" $s={13} $c={GREEN}>注:</SheetText>
      {notes.map(([t, y]) => <SheetText key={y} x="1117" y={y} $s={12} $c={GREEN}>{t}</SheetText>)}

      {/* sheet title */}
      <circle cx="790" cy="841" r="9" fill="none" stroke={CYAN} />
      <circle cx="825" cy="841" r="9" fill="none" stroke={CYAN} />
      <SheetText x="790" y="846" $mid $s={14}>1</SheetText>
      <SheetText x="825" y="846" $mid $s={14}>4</SheetText>
      <Stroke d="M800 841.500h12" />
      <SheetText x="834" y="846" $s={14}>主桁架立面布置图</SheetText>
      <Stroke d="M781 853h195" c="#00ffff" w={2} />
      <Stroke d="M781 855.500h195" />
      {sheetMark.map(([t, x, size, y]) => <OutlineText key={t} x={x} y={y} $s={size} $wt={100}>{t}</OutlineText>)}

      {/* crosshair and axes */}
      <Stroke d="M1480.500 165v1014M1480.500 1192v99M33 1185.500h1441M1487 1185.500h184M1474.500 1179.500h12v12h-12z" c="#fff" />
      <Stroke d="M59.500 1214v50.500H110M55.500 1259.500h9v9h-9z" c="#fff" />
      <ThinText x="61" y="1210" $s={19} $wt={300} $c="#fff">Y</ThinText>
      <ThinText x="114" y="1263" $s={19} $wt={300} $c="#fff">X</ThinText>
    </Sheet>
  )
}

const CubeText = styled.text`
  font-family: "Noto Sans CJK SC", sans-serif;
  font-size: ${({ $s }) => $s || 19}px;
  fill: ${({ $c }) => $c || '#a8a8a8'};
  text-anchor: middle;
`

function Compass() {
  return (
    <Navigator>
      <svg width="140" height="160" viewBox="0 -12 140 160">
        <circle cx="70" cy="68" r="53.500" fill="none" stroke="#2a2a2a" strokeWidth="13" />
        <rect x="44.500" y="42.500" width="51" height="51" fill="#a6a6a6" stroke="#7a7a7a" />
        <rect x="54" y="52" width="32" height="32" fill="#989aa2" />
        <CubeText x="70" y="79" $s={30} $c="#4a4a50">上</CubeText>
        <CubeText x="70" y="19">北</CubeText>
        <CubeText x="70" y="133">南</CubeText>
        <CubeText x="13" y="76">西</CubeText>
        <CubeText x="126" y="76">东</CubeText>
      </svg>
      <Wcs>WCS<svg width="8" height="6" viewBox="0 0 8 6"><path d="M0 0h8L4 5z" fill="#a8a8b0" stroke="#6d6d78" /></svg></Wcs>
    </Navigator>
  )
}

// "*" in front marks a mode that is switched on, "v" is a drop arrow
const statusGroups = [
  ['grid dots v'],
  ['infer', '*dynInput', '*ortho', 'polar v iso v', 'angle', '*osnap v', 'weight', '*transp', 'cycle', 'osnap3d v'],
  ['*ducs filter v *gizmo v'],
  ['*annoOn annoAuto annoScale 1:1/100% v'],
  ['gear v', 'plus'],
  ['ruler 小数 v', 'quickProps'],
  ['lockUi v', 'isolate'],
  ['*perf'],
  ['trusted'],
  ['fullScreen', 'menu'],
]

function StatusItem({ item }) {
  if (item === 'v') return <IconButton $w={16} aria-label="options"><Icon name="drop" /></IconButton>
  if (item === '1:1/100%') return <StatusText $w={58}>1:1 / 100%</StatusText>
  if (item === '小数') return <StatusText $w={57} $align="left" $pad={5}>小数</StatusText>
  const name = item.replace('*', '')
  return <IconButton $w={name === 'trusted' ? 30 : 24} $on={item[0] === '*'} aria-label={name}><Icon name={name} /></IconButton>
}

function App() {
  return (
    <>
      <GlobalStyle />
      <Window>
        <TitleBar>
          <Side>
            <AppButton aria-label="app menu"><Logo /></AppButton>
            <IconButton $w={16} aria-label="drop"><Icon name="drop" size={14} /></IconButton>
            <Tools list="newFile open save saveAs openMobile saveMobile print undo" w={24} />
            <IconButton $w={12} aria-label="drop"><Icon name="drop" size={12} /></IconButton>
            <IconButton $w={24} aria-label="redo"><Icon name="redoOff" /></IconButton>
            <IconButton $w={12} aria-label="drop"><Icon name="drop" size={12} /></IconButton>
            <IconButton $w={18} aria-label="customize"><Icon name="customize" /></IconButton>
            <Share><Icon name="plane" />共享</Share>
          </Side>
          <Title>{'Autodesk AutoCAD 2025     某集团门廊、门卫钢结构图纸.dwg'}</Title>
          <Side>
            <svg width="5" height="8" viewBox="0 0 5 8"><path d="M0 0l4 4-4 4z" fill={W} /></svg>
            <SearchBox aria-label="search" placeholder="键入关键字或短语" />
            <IconButton aria-label="search"><Icon name="searchGlass" /></IconButton>
            <Login><Icon name="user" />登录</Login>
            <IconButton $w={16} aria-label="drop"><Icon name="drop" size={12} /></IconButton>
            <IconButton $w={24} aria-label="cart"><Icon name="cart" size={14} /></IconButton>
            <IconButton aria-label="apps"><Icon name="aMark" /></IconButton>
            <IconButton $w={12} aria-label="drop"><Icon name="drop" size={12} /></IconButton>
            <VLine />
            <IconButton aria-label="help"><Icon name="help" /></IconButton>
            <IconButton $w={12} aria-label="drop"><Icon name="drop" size={12} /></IconButton>
            <WinButtons><Tools list="minimize maximize close" w={46} /></WinButtons>
          </Side>
        </TitleBar>

        <MenuBar>
          {menus.map((m) => <TextButton key={m} $c="#b4b8bf">{m}</TextButton>)}
          <MenuEnd><Tools list="minimize restore close" w={32} h={20} /></MenuEnd>
        </MenuBar>

        <TabBar $h={26}>
          <TabTool aria-label="menu"><Icon name="menu" /></TabTool>
          <Slash $l={9} $r={12} />
          <Tab>开始</Tab>
          <Tab $active $end={11}>某集团门廊、门卫钢结构图纸*<Icon name="closeSmall" size={14} /></Tab>
          <TabTool aria-label="new tab"><Icon name="plus" /></TabTool>
          <Slash />
        </TabBar>

        <Work>
          <Bars>
            <BarRow>
              <ToolBar>
                <Grip />
                <Tools list="newFile open save | print preview publish dwf | cut copy paste match blockEdit | undo dropBig redo dropBig | hand zoomRt zoomWin zoomPrev | properties designCenter palettes sheets markup calc | help" />
              </ToolBar>
              <ToolBar>
                <Grip />
                <Tools list="layerProps" />
                <ComboBox label="layer" value="0" w={300} before={<><Icon name="bulb" /><Icon name="sun" /><Icon name="vpSun" /><Icon name="unlock" /><Swatch /></>} />
                <Tools list="layerCurrent layerPrev layerStates" />
              </ToolBar>
              <ToolBar>
                <Grip />
                <ComboBox label="color" value="ByBlock" w={150} before={<Swatch />} />
                <Sep />
                <ComboBox label="linetype" value="ByLayer" w={160} before={<LineSample $w={60} />} />
                <Sep />
                <ComboBox label="lineweight" value="ByLayer" w={125} before={<LineSample $w={35} />} />
                <Sep />
                <ComboBox label="plot style" value="ByColor" w={120} pad={9} off />
              </ToolBar>
            </BarRow>
            <BarRow>
              <ToolBar>
                <Grip />
                <Tools list="dimLinear dimAligned dimArc dimOrdinate | dimRadius dimJog dimDiameter dimAngular | dimQuick dimBaseline dimContinue dimSpace dimBreak | tolerance centerMark inspect jogLine | dimEdit dimTextEdit dimUpdate |" />
                <ComboBox label="dimension style" value="normal" w={120} pad={18} />
                <Tools list="dimStyle" />
              </ToolBar>
              <ToolBar>
                <Grip />
                <Tools list="union subtract intersect | extrudeF moveF offsetF deleteF rotateF taperF copyF colorF | filletE chamferE copyE colorE | imprint clean separate shell check" />
              </ToolBar>
            </BarRow>
            <BarRow>
              <ToolBar>
                <Grip />
                <Tools list="refEdit refSave refClose" />
              </ToolBar>
            </BarRow>
          </Bars>

          <Main>
            <Rail $w={29} $pad={0}>
              <ToolBar $col><Grip $col /><Tools list={drawTools} w={22} /></ToolBar>
            </Rail>
            <Canvas>
              <Drawing />
              <Compass />
              <CommandPanel>
                <History>
                  <HistoryLine $bg="#3f3f3f" $c="#a8a8a8">命令: _textedit</HistoryLine>
                  <HistoryLine $bg="#505050" $c="#cfcfcf">当前设置: 编辑模式 = Multiple</HistoryLine>
                  <HistoryLine $bg="#606060" $c="#f4f4f4">选择注释对象或 [放弃(U)/模式(M)]: *取消*</HistoryLine>
                </History>
                <CommandBar>
                  <Grip $bg="#222933" />
                  <IconButton $w={22} aria-label="close"><Icon name="closeSmall" /></IconButton>
                  <IconButton $w={24} aria-label="customize"><Icon name="wrench" size={15} /></IconButton>
                  <CommandField>
                    <Icon name="prompt" />
                    <Icon name="downDark" size={9} />
                    <CommandInput aria-label="command" placeholder="键入命令" />
                    <Icon name="upDark" size={12} />
                  </CommandField>
                </CommandBar>
              </CommandPanel>
            </Canvas>
            <Rail $w={32} $pad={4}>
              <ToolBar $col><Grip $col /><Tools list={modifyTools} w={22} /></ToolBar>
            </Rail>
          </Main>
        </Work>

        <TabBar $h={24}>
          <TabTool aria-label="menu"><Icon name="menu" /></TabTool>
          <Tab $active $end={17}>模型</Tab>
          <Tab $pad={6}>布局1</Tab>
          <Slash $l={6} />
          <TabTool aria-label="new layout"><Icon name="plus" size={14} /></TabTool>
          <Slash />
        </TabBar>

        <StatusBar>
          <StatusFill />
          <Coords>166142, 641, 0</Coords>
          <StatusCell><StatusText $w={30}>模型</StatusText></StatusCell>
          {statusGroups.map((group) => (
            <StatusGroup key={group[0]}>
              {group.map((cell) => (
                <StatusCell key={cell}>
                  {cell.split(' ').map((item, i) => <StatusItem key={i} item={item} />)}
                </StatusCell>
              ))}
            </StatusGroup>
          ))}
        </StatusBar>
      </Window>
    </>
  )
}

export default App
